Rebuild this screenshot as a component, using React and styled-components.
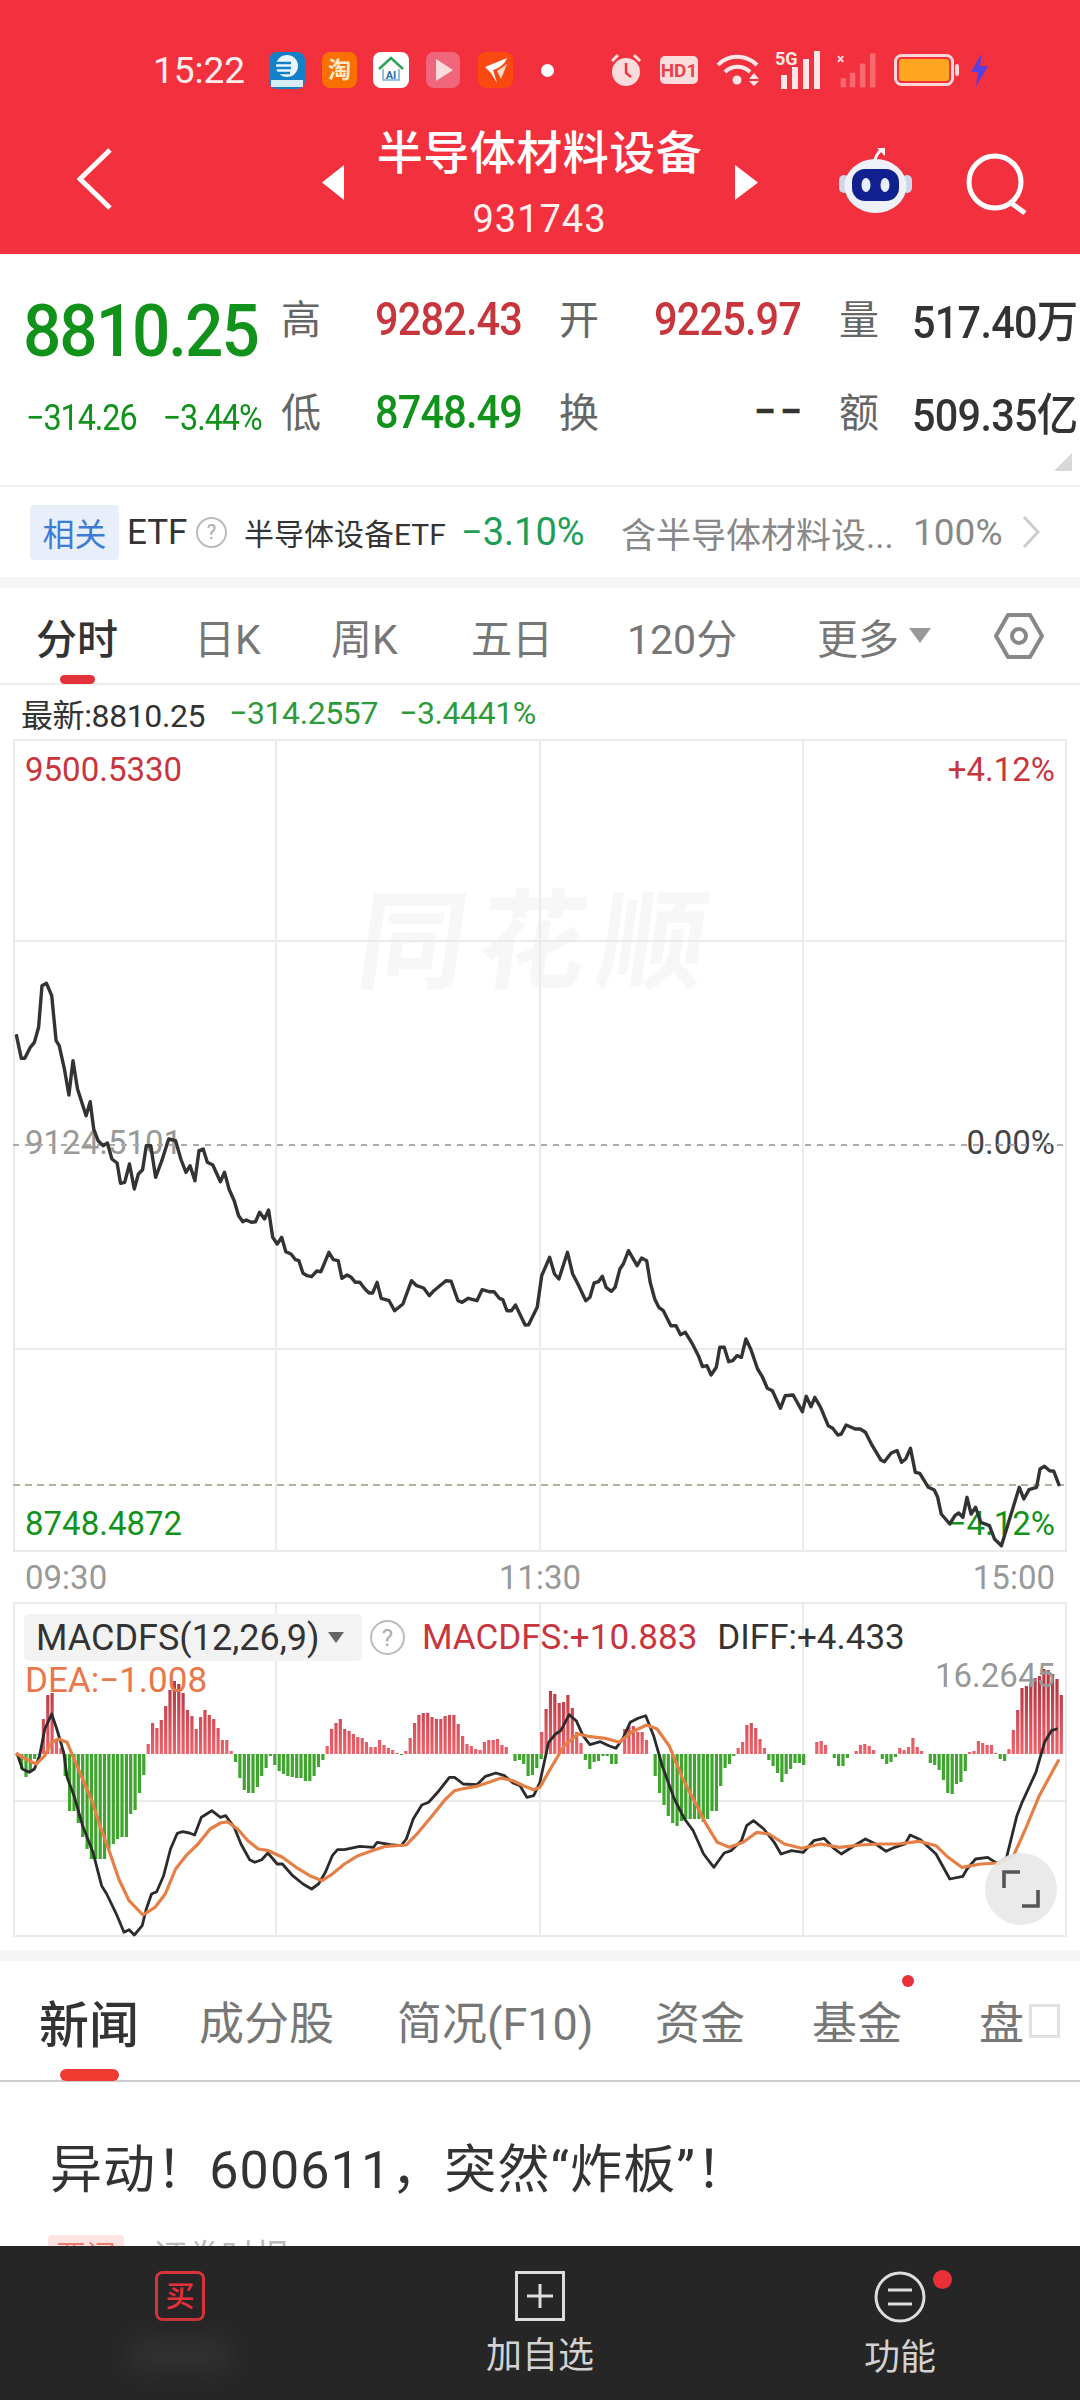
import React from 'react';
import styled, { createGlobalStyle } from 'styled-components';

const GlobalStyle = createGlobalStyle`
  html, body { margin: 0; padding: 0; background: #fff; }
  body { font-family: Roboto, "Noto Sans CJK SC", sans-serif; }
  * { box-sizing: border-box; }
`;

const RED = '#c8353c';
const GREEN = '#11921a';
const LINE = '#ebebeb';

const Page = styled.div`
  width: 1080px;
  height: 2400px;
  overflow: hidden;
  display: flex;
  flex-direction: column;
  background: #fff;
`;

/* header */
const Header = styled.header`
  height: 254px;
  flex: none;
  background: #f3303d;
  color: #fff;
`;
const StatusBar = styled.div`
  height: 72px;
  margin-top: 34px;
  padding-left: 153px;
  display: flex;
  align-items: center;
`;
const Time = styled.span`
  width: 116px;
  font-size: 37px;
  color: #fdeeee;
`;
const StatusIcon = styled.svg`
  flex: none;
  margin-left: ${(p) => p.$gap || 0}px;
`;
const NavBar = styled.div`
  height: 148px;
  padding-left: 77px;
  display: flex;
  align-items: flex-start;
`;
const NavIcon = styled.svg`
  flex: none;
  margin-top: ${(p) => p.$top}px;
  margin-left: ${(p) => p.$gap || 0}px;
`;
const TitleBlock = styled.div`
  width: 391px;
  flex: none;
  text-align: center;
`;
const Title = styled.div`
  font-size: 46px;
  line-height: 50px;
  margin-top: 22px;
  font-weight: 500;
  letter-spacing: 0.5px;
`;
const Code = styled.div`
  font-size: 38px;
  line-height: 44px;
  margin-top: 19px;
  letter-spacing: 1px;
  color: #fff0f0;
`;

/* quote block */
const Quote = styled.section`
  position: relative;
  height: 231px;
  flex: none;
  padding: 18px 0 0 26px;
  display: grid;
  grid-template-columns: 255px 94px 184px 95px 185px 73px 168px;
  grid-template-rows: 93px 93px;
  align-items: center;
`;
const BigPrice = styled.div`
  font-size: 73px;
  font-weight: 500;
  letter-spacing: -2.2px;
  line-height: 1;
  margin: 26px 0 0 -3px;
  color: ${GREEN};
  transform: scaleX(0.925);
  transform-origin: left;
`;
const Changes = styled.div`
  display: flex;
  gap: 29px;
  margin-top: 12px;
  font-size: 36px;
  letter-spacing: -1.2px;
  color: ${GREEN};
  transform: scaleX(0.9);
  transform-origin: left;
  white-space: nowrap;
`;
const QuoteLabel = styled.div`
  font-size: 40px;
  margin-top: -4px;
  color: #666;
`;
const QuoteValue = styled.div`
  font-size: 46px;
  font-weight: 500;
  letter-spacing: -0.9px;
  white-space: nowrap;
  color: ${(p) => p.$color || '#333'};
  transform: scaleX(0.9);
  transform-origin: left;
`;
const EmptyValue = styled.div`
  width: 145px;
  font-size: 40px;
  font-weight: 700;
  letter-spacing: -3px;
  text-align: right;
  color: #333;
`;
const QuoteAmount = styled(QuoteValue)`
  font-size: 45px;
  letter-spacing: -0.8px;
  transform: scaleX(0.92);
`;
const CornerMark = styled.div`
  position: absolute;
  right: 8px;
  bottom: 14px;
  width: 18px;
  height: 18px;
  background: #d8d8d8;
  clip-path: polygon(100% 0, 100% 100%, 0 100%);
`;

/* etf row */
const EtfRow = styled.section`
  height: 92px;
  flex: none;
  border-top: 2px solid #f0f0f0;
  padding-left: 30px;
  display: flex;
  align-items: center;
  white-space: nowrap;
`;
const EtfBadge = styled.span`
  width: 89px;
  height: 55px;
  display: flex;
  align-items: center;
  justify-content: center;
  font-size: 32px;
  color: #3d7cd6;
  background: #e8effb;
  border-radius: 4px;
`;
const EtfText = styled.span`
  margin-left: ${(p) => p.$gap}px;
  font-size: ${(p) => p.$size}px;
  color: ${(p) => p.$color};
  width: ${(p) => p.$width}px;
`;
const HelpDot = styled.span`
  flex: none;
  width: ${(p) => p.$size}px;
  height: ${(p) => p.$size}px;
  margin-left: ${(p) => p.$gap}px;
  border: 2px solid #bbb;
  border-radius: 50%;
  color: #aaa;
  font-size: ${(p) => p.$size - 11}px;
  display: flex;
  align-items: center;
  justify-content: center;
`;
const Divider = styled.div`
  height: ${(p) => p.$h}px;
  flex: none;
  background: ${(p) => p.$color || '#f5f5f5'};
`;

/* period tabs */
const Periods = styled.nav`
  height: 97px;
  flex: none;
  padding-left: 36px;
  border-bottom: 2px solid #ececec;
  display: grid;
  grid-template-columns: 158px 137px 140px 156px 190px 177px 1fr;
  align-items: center;
  position: relative;
`;
const PeriodTab = styled.span`
  display: flex;
  align-items: center;
  gap: 10px;
  font-size: 41px;
  color: ${(p) => (p.$active ? '#333' : '#777')};
  font-weight: ${(p) => (p.$active ? 500 : 400)};
`;
const TabMark = styled.i`
  position: absolute;
  left: ${(p) => p.$left}px;
  bottom: -1px;
  width: ${(p) => p.$width}px;
  height: ${(p) => p.$height}px;
  background: ${(p) => p.$color};
  border-radius: ${(p) => p.$height / 2}px;
`;
const InfoLine = styled.div`
  height: 54px;
  flex: none;
  padding: 2px 0 0 21px;
  display: grid;
  grid-template-columns: 208px 170px 1fr;
  align-items: center;
  font-size: 32px;
  letter-spacing: -0.4px;
  color: #333;
`;
const InfoChange = styled.span`
  color: #2f9a3a;
`;

/* charts */
const ChartPanel = styled.div`
  position: relative;
  margin-left: 13px;
  width: 1054px;
  height: ${(p) => p.$h}px;
  flex: none;
  overflow: hidden;
`;
const ChartLayer = styled.svg`
  position: absolute;
  inset: 0;
`;
const Watermark = styled.div`
  position: absolute;
  left: 346px;
  top: 150px;
  font-size: 108px;
  line-height: 1;
  font-weight: 700;
  letter-spacing: 12px;
  color: #f7f7f7;
  transform: skewX(-8deg);
  white-space: nowrap;
`;
const ChartLabel = styled.span`
  position: absolute;
  top: ${(p) => p.$top}px;
  ${(p) => (p.$right ? 'right: 12px;' : 'left: 12px;')}
  font-size: ${(p) => p.$size || 33}px;
  line-height: 1;
  color: ${(p) => p.$color};
  white-space: nowrap;
`;
const TimeAxis = styled.div`
  height: 49px;
  flex: none;
  padding: 0 25px;
  display: flex;
  justify-content: space-between;
  align-items: center;
  font-size: 33px;
  color: #999;
`;
const Legend = styled.div`
  position: absolute;
  left: 11px;
  top: 12px;
  display: flex;
  align-items: center;
  font-size: 36px;
  white-space: nowrap;
`;
const LegendPill = styled.span`
  width: 338px;
  height: 47px;
  padding-left: 12px;
  border-radius: 5px;
  background: #f3f3f3;
  color: #333;
  display: flex;
  align-items: center;
  gap: 8px;
`;
const DownCaret = styled.i`
  width: 0;
  height: 0;
  border-left: ${(p) => p.$size}px solid transparent;
  border-right: ${(p) => p.$size}px solid transparent;
  border-top: ${(p) => p.$size * 1.4}px solid ${(p) => p.$color};
`;
const LegendValue = styled.span`
  margin-left: ${(p) => p.$gap}px;
  font-size: 35px;
  color: ${(p) => p.$color};
`;
const ExpandButton = styled.div`
  position: absolute;
  left: 972px;
  top: 251px;
  width: 72px;
  height: 72px;
  border-radius: 50%;
  background: rgba(232, 232, 232, 0.92);
  display: flex;
  align-items: center;
  justify-content: center;
`;

/* news */
const NewsTabs = styled.nav`
  height: 121px;
  flex: none;
  position: relative;
  padding-left: 39px;
  border-bottom: 2px solid #ccc;
  display: grid;
  grid-template-columns: 160px 198px 258px 157px 167px 1fr;
  align-items: center;
`;
const NewsTab = styled.span`
  position: relative;
  display: flex;
  align-items: center;
  width: fit-content;
  font-size: ${(p) => (p.$active ? 50 : 45)}px;
  font-weight: ${(p) => (p.$active ? 500 : 400)};
  color: ${(p) => (p.$active ? '#333' : '#777')};
  white-space: nowrap;
`;
const Dot = styled.i`
  position: absolute;
  left: ${(p) => p.$left}px;
  top: ${(p) => p.$top}px;
  width: ${(p) => p.$size}px;
  height: ${(p) => p.$size}px;
  border-radius: 50%;
  background: #e8303a;
`;
const Tofu = styled.i`
  width: 31px;
  height: 34px;
  margin-left: 5px;
  border: 3px solid #e2e2e2;
`;
const NewsBody = styled.article`
  height: 164px;
  flex: none;
  overflow: hidden;
  padding: 58px 0 0 50px;
`;
const Headline = styled.h2`
  margin: 0;
  font-size: 52px;
  line-height: 62px;
  font-weight: 400;
  color: #333;
  letter-spacing: 1.1px;
  white-space: nowrap;
`;
const NewsMeta = styled.div`
  margin-top: 33px;
  display: flex;
  align-items: flex-start;
  gap: 29px;
  margin-left: -2px;
  font-size: 34px;
  line-height: 44px;
  color: #bbb;
`;
const MetaTag = styled.span`
  width: 76px;
  height: 44px;
  background: #fde4e2;
  color: #f0796f;
  font-size: 30px;
  text-align: center;
  border-radius: 4px;
`;

/* bottom bar */
const BottomBar = styled.footer`
  flex: 1;
  background: #262626;
  display: grid;
  grid-template-columns: repeat(3, 360px);
`;
const BarItem = styled.div`
  position: relative;
  padding-top: 25px;
  display: flex;
  flex-direction: column;
  align-items: center;
  color: #d2d2d2;
  font-size: 36px;
`;
const BarLabel = styled.span`
  margin-top: 14px;
  line-height: 42px;
`;
const Smudge = styled.i`
  width: 100px;
  height: 34px;
  margin-top: 16px;
  background: #313131;
  filter: blur(12px);
`;

/* chart data: traced from crops, x scaled 2.904, y scaled 3 */
const toPoints = (pts, ox, oy) => pts.map(([x, y]) => [ox + x / 2.904, oy + y / 3]);
const toPath = (pts) =>
  pts.map(([x, y], i) => `${i ? 'L' : 'M'}${x.toFixed(1)} ${y.toFixed(1)}`).join(' ');

const priceA = [[48,890],[62,958],[72,958],[88,925],[100,910],[112,865],[122,740],[135,733],[150,770],[163,905],[172,920],[187,990],[200,1068],[212,965],[225,1050],[250,1130],[262,1088],[272,1170]];
const priceB = [[285,5],[300,20],[312,12],[325,60],[340,72],[350,133],[362,130],[376,75],[390,150],[402,105],[414,92],[425,20],[438,20],[452,115],[470,65],[490,0],[510,5],[525,60],[540,100],[552,80],[566,125],[578,35],[590,30],[602,70],[618,78],[640,128],[652,100],[665,150],[680,185],[693,230],[705,248],[715,243],[730,250],[742,248],[754,220],[768,240],[780,213],[792,295],[805,315],[818,295],[830,338],[845,345],[858,362],[868,365],[880,403],[892,410],[905,413],[920,396],[932,398],[955,340],[968,362],[982,365],[993,418],[1008,408],[1020,415],[1032,430],[1045,430],[1060,450],[1072,462],[1082,462],[1095,430],[1107,478],[1130,485],[1146,515],[1170,495],[1195,425],[1210,440],[1230,447],[1247,470],[1260,455],[1295,425],[1310,427],[1330,485],[1342,490],[1360,478],[1385,485],[1400,452],[1420,458],[1435,458],[1450,478],[1460,482],[1472,515],[1485,515],[1497,498],[1525,558],[1535,557],[1560,505]];
const priceC = [[5,410],[28,355],[42,405],[55,420],[80,340],[95,405],[110,435],[133,485],[145,475],[157,432],[170,428],[181,412],[192,445],[207,457],[218,445],[232,390],[242,375],[257,335],[282,380],[295,357],[310,365],[320,430],[333,480],[345,505],[358,515],[380,560],[395,560],[408,587],[422,580],[440,610],[460,650],[472,683],[485,680],[497,708],[512,685],[522,625],[535,625],[548,668],[560,665],[572,650],[585,655],[598,600],[612,630],[632,690],[645,712],[660,748],[675,755],[698,808],[712,770],[735,768],[762,818],[773,772],[787,803],[798,775],[815,805],[837,860],[850,868],[865,888],[875,885],[889,858],[915,870],[930,870],[945,880],[965,920],[990,963],[1000,968],[1020,942],[1037,935],[1050,970],[1062,960],[1076,928],[1090,1000],[1103,1003],[1128,1045],[1145,1053],[1155,1075],[1165,1125],[1190,1155],[1205,1130],[1216,1122],[1228,1135],[1240,1075],[1252,1125],[1265,1105],[1280,1150],[1305,1160],[1320,1200],[1340,1220],[1392,1045],[1405,1080],[1420,1052],[1442,1045],[1452,990],[1465,982],[1480,995],[1492,997],[1507,1037]];
const pricePath = toPath([
  ...toPoints(priceA, 0, 740),
  ...toPoints(priceB, 0, 1140),
  ...toPoints(priceC, 540, 1140),
]);

const difA = [[50,465],[65,510],[85,520],[100,510],[115,470],[130,390],[150,345],[165,390],[185,460],[195,535],[215,590],[240,680],[270,760],[295,860],[310,885],[340,950],[360,1000],[375,992],[390,1008],[413,980],[425,930],[440,885],[455,878],[475,830],[495,750],[515,703],[530,698],[550,702],[565,708],[585,655],[615,635],[640,655],[655,650],[680,685],[700,735],[725,782],[740,790],[760,782],[778,762],[805,795],[820,795],[850,830],[880,855],[905,870],[925,855],[945,820],[965,770],[980,752],[1000,752],[1045,742],[1085,745],[1095,730],[1135,737],[1165,740],[1180,720],[1200,660],[1225,618],[1245,610],[1275,575],[1305,535],[1320,535],[1345,555],[1385,557],[1410,532],[1440,522],[1465,530],[1490,552],[1510,560],[1530,595],[1550,590],[1568,550]];
const difB = [[25,430],[45,405],[60,395],[85,347],[105,365],[125,410],[145,437],[175,428],[200,440],[220,448],[240,420],[262,370],[285,358],[307,350],[330,410],[355,500],[390,600],[420,660],[445,695],[475,765],[505,805],[535,762],[555,755],[585,725],[600,680],[620,665],[650,690],[680,730],[700,765],[730,755],[765,760],[795,725],[825,718],[850,745],[875,765],[910,742],[945,720],[975,735],[1005,757],[1030,745],[1060,735],[1075,708],[1105,722],[1150,765],[1190,840],[1228,832],[1240,810],[1265,780],[1300,775],[1330,795],[1355,775],[1385,650],[1400,610],[1440,520],[1465,430],[1485,395],[1500,390]];
const deaA = [[50,465],[75,480],[105,495],[130,470],[150,430],[170,420],[195,430],[215,480],[240,540],[265,600],[290,680],[315,750],[345,840],[375,905],[415,948],[450,925],[480,885],[510,810],[540,770],[575,735],[610,690],[640,672],[660,668],[690,690],[720,725],[750,750],[780,755],[820,775],[860,805],[900,830],[935,845],[965,825],[1000,795],[1040,770],[1080,755],[1120,742],[1180,738],[1215,700],[1255,650],[1290,605],[1320,575],[1340,570],[1385,562],[1420,550],[1455,537],[1490,545],[1520,560],[1550,572],[1568,565]];
const deaB = [[30,510],[70,440],[110,405],[140,412],[190,418],[230,430],[265,400],[310,378],[340,390],[375,440],[415,540],[450,610],[485,680],[515,730],[550,745],[590,730],[630,700],[665,705],[710,735],[760,748],[815,735],[870,745],[930,738],[985,735],[1040,735],[1100,727],[1150,740],[1185,775],[1225,805],[1280,795],[1330,792],[1375,770],[1410,690],[1450,590],[1505,485]];
const difPath = toPath([...toPoints(difA, 0, 1600), ...toPoints(difB, 540, 1600)]);
const deaPath = toPath([...toPoints(deaA, 0, 1600), ...toPoints(deaB, 540, 1600)]);

const barsLeft = [-2,-15,-23,-18,-5,-1,35,59,61,15,6,-22,-57,-57,-69,-83,-95,-105,-105,-105,-105,-95,-90,-85,-83,-83,-60,-56,-39,-21,10,31,26,34,48,64,73,70,61,44,38,25,37,44,39,35,26,14,14,3,-8,-24,-36,-39,-39,-33,-22,-14,-2,-11,-17,-20,-22,-23,-24,-24,-27,-27,-22,-13,-6,8,25,31,35,25,23,20,17,16,12,7,7,14,9,6,4,1,-1,3,16,31,39,41,41,37,35,35,38,39,39,30,18,10,8,5,4,12,14,14,15,9,7,0,-7,-6,-10,-22,-21,-14,-5];
const barsRight = [22,45,63,60,51,52,59,46,22,11,-6,-15,-8,-7,-2,-2,-10,-10,0,25,28,28,22,22,14,0,-22,-39,-51,-62,-69,-72,-67,-65,-65,-65,-65,-68,-65,-57,-57,-32,-14,-10,-2,6,12,29,31,26,15,6,-6,-12,-19,-28,-20,-15,-9,-9,-11,0,0,12,13,9,0,-4,-12,-12,-4,0,3,9,10,8,4,0,-5,-10,-8,-3,6,4,7,16,7,3,0,-9,-11,-16,-26,-39,-40,-30,-28,-17,2,3,13,11,9,9,1,-5,-7,5,24,44,66,68,71,76,78,85,84,80,75,59];

const PITCH = 12.68 / 2.904;
const ZERO = 1755;
const barPath = (sign) => {
  const one = (vals, start) =>
    vals
      .map((v, i) => (v * sign > 0 ? `M${(start + i * PITCH).toFixed(1)} ${ZERO}V${ZERO - v}` : ''))
      .join('');
  return one(barsLeft, 50 / 2.904) + one(barsRight, 540 + 5 / 2.904);
};

const GridLines = ({ xs, ys, x0, x1, y0, y1 }) => (
  <g stroke={LINE} strokeWidth="2" fill="none">
    {xs.map((x) => <path key={x} d={`M${x} ${y0}V${y1}`} />)}
    {ys.map((y) => <path key={y} d={`M${x0} ${y}H${x1}`} />)}
  </g>
);

const ROUND = { fill: 'none', strokeLinejoin: 'round', strokeLinecap: 'round' };

const Signal = ({ faded, gap }) => (
  <StatusIcon $gap={gap} width={faded ? 43 : 47} height="42" viewBox="0 0 47 42">
    {faded ? (
      <g fill="#f9696f">
        <rect x="4" y="30" width="6" height="10" />
        <rect x="14" y="24" width="6" height="16" />
        <rect x="25" y="14" width="6" height="26" />
        <rect x="36" y="3" width="6" height="37" />
        <text x="0" y="14" fontSize="15" fontWeight="700" fill="#fde">×</text>
      </g>
    ) : (
      <g fill="#fbe7e7">
        <text x="0" y="16" fontSize="18" fontWeight="700" fontFamily="Roboto">5G</text>
        <rect x="6" y="26" width="6" height="14" />
        <rect x="17" y="18" width="6" height="22" />
        <rect x="28" y="10" width="6" height="30" />
        <rect x="39" y="2" width="6" height="38" />
      </g>
    )}
  </StatusIcon>
);

const StatusIcons = () => (
  <>
    <StatusIcon width="36" height="37" viewBox="0 0 36 37">
      <rect width="36" height="37" rx="8" fill="#1480c8" />
      <circle cx="18" cy="14" r="11" fill="#eaf6fd" />
      <path d="M5 11h17M6 16h16M9 21h12" stroke="#1480c8" strokeWidth="2.6" />
      <rect x="2" y="28" width="32" height="7" fill="#d8ecf8" />
    </StatusIcon>
    <StatusIcon $gap={17} width="35" height="36" viewBox="0 0 35 36">
      <rect width="35" height="36" rx="8" fill="#f97000" />
      <text x="17.5" y="26" textAnchor="middle" fontSize="23" fontWeight="700" fill="#ffe9c9" fontFamily="Noto Sans CJK SC">淘</text>
    </StatusIcon>
    <StatusIcon $gap={16} width="36" height="36" viewBox="0 0 36 36">
      <rect width="36" height="36" rx="8" fill="#fff" />
      <path d="M6 17 18 6l12 11" stroke="#30a45a" strokeWidth="2.6" fill="none" />
      <path d="M10 17v11h16V17" stroke="#7bb0d8" strokeWidth="1.6" fill="none" />
      <text x="18" y="27" textAnchor="middle" fontSize="11" fontWeight="700" fill="#2a6fb0">AI</text>
    </StatusIcon>
    <StatusIcon $gap={17} width="34" height="36" viewBox="0 0 34 36">
      <rect width="34" height="36" rx="8" fill="#f0677c" />
      <path d="M10 7 27 18 10 29Z" fill="#fbdcdc" />
    </StatusIcon>
    <StatusIcon $gap={18} width="35" height="36" viewBox="0 0 35 36">
      <rect width="35" height="36" rx="8" fill="#fa4a12" />
      <path d="M7 15 29 6c-2 6-8 10-14 12l4 13-6-10Z" fill="#fff" />
      <path d="M19 19 29 12l-6 15Z" fill="#ffd9c8" />
    </StatusIcon>
    <StatusIcon $gap={28} width="13" height="13" viewBox="0 0 13 13">
      <circle cx="6.5" cy="6.5" r="6.5" fill="#fff" />
    </StatusIcon>
    <StatusIcon $gap={56} width="32" height="34" viewBox="0 0 32 34">
      <circle cx="16" cy="19" r="14" fill="#fbdcdc" />
      <path d="M16 10v10l5 4" stroke="#f3303d" strokeWidth="2.4" fill="none" />
      <path d="M2 8 8 2M30 8l-6-6" stroke="#fbdcdc" strokeWidth="3" />
    </StatusIcon>
    <StatusIcon $gap={18} width="38" height="28" viewBox="0 0 38 28">
      <rect width="38" height="28" rx="5" fill="#fbdcdc" />
      <text x="19" y="21" textAnchor="middle" fontSize="19" fontWeight="700" fill="#e8434c" fontFamily="Roboto">HD1</text>
    </StatusIcon>
    <StatusIcon $gap={18} width="45" height="32" viewBox="0 0 45 32">
      <g stroke="#fbe7e7" strokeWidth="4" fill="none">
        <path d="M2 11C12 0 30 0 41 11" />
        <path d="M9 18c7-7 18-7 25 0" />
      </g>
      <circle cx="21" cy="26" r="4.5" fill="#fbe7e7" />
      <path d="M33 25h10l-5-6ZM33 27h10l-5 5Z" fill="#fbe7e7" />
    </StatusIcon>
    <Signal gap={14} />
    <Signal faded gap={15} />
    <StatusIcon $gap={14} width="65" height="32" viewBox="0 0 65 32">
      <rect x="1.5" y="1.5" width="57" height="29" rx="6" fill="none" stroke="#fbd6d6" strokeWidth="3" />
      <rect x="5" y="5" width="50" height="22" rx="3" fill="#ffa51f" />
      <rect x="61" y="10" width="4" height="12" rx="2" fill="#fbd6d6" />
    </StatusIcon>
    <StatusIcon $gap={11} width="18" height="34" viewBox="0 0 18 34">
      <path d="M12 0 1 19h7l-2 15L18 13h-8Z" fill="#5a3fe0" />
    </StatusIcon>
  </>
);

const Robot = () => (
  <NavIcon $top={41} $gap={81} width="73" height="66" viewBox="0 0 73 66">
    <path d="M36 14c0-5 3-8 6-11" stroke="#f6f6fa" strokeWidth="3" fill="none" />
    <path d="M38 1h8v8Z" fill="#f6f6fa" />
    <rect x="0" y="28" width="10" height="18" rx="5" fill="#cfd6e6" />
    <rect x="63" y="28" width="10" height="18" rx="5" fill="#cfd6e6" />
    <ellipse cx="36.5" cy="39" rx="31" ry="27" fill="#eef1f7" />
    <rect x="13" y="22" width="47" height="32" rx="13" fill="#10218f" />
    <ellipse cx="27" cy="38" rx="4.5" ry="7" fill="#e7eeff" />
    <ellipse cx="46" cy="38" rx="4.5" ry="7" fill="#e7eeff" />
  </NavIcon>
);

export default function App() {
  return (
    <Page lang="zh-CN">
      <GlobalStyle />
      <Header>
        <StatusBar>
          <Time>15:22</Time>
          <StatusIcons />
        </StatusBar>
        <NavBar>
          <NavIcon $top={42} width="35" height="62" viewBox="0 0 35 62">
            <path d="M33 2 3 31l30 29" stroke="#fff" strokeWidth="5" fill="none" />
          </NavIcon>
          <NavIcon $top={59} $gap={210} width="22" height="35" viewBox="0 0 22 35">
            <path d="M22 0v35L0 17.5Z" fill="#fff" />
          </NavIcon>
          <TitleBlock>
            <Title>半导体材料设备</Title>
            <Code>931743</Code>
          </TitleBlock>
          <NavIcon $top={59} width="23" height="35" viewBox="0 0 23 35">
            <path d="M0 0v35l23-17.5Z" fill="#fff" />
          </NavIcon>
          <Robot />
          <NavIcon $top={47} $gap={54} width="62" height="62" viewBox="0 0 62 62">
            <circle cx="29" cy="29" r="26" stroke="#fff" strokeWidth="5" fill="none" />
            <path d="M45 50 59 60" stroke="#fff" strokeWidth="5" />
          </NavIcon>
        </NavBar>
      </Header>

      <Quote>
        <BigPrice>8810.25</BigPrice>
        <QuoteLabel>高</QuoteLabel>
        <QuoteValue $color={RED}>9282.43</QuoteValue>
        <QuoteLabel>开</QuoteLabel>
        <QuoteValue $color={RED}>9225.97</QuoteValue>
        <QuoteLabel>量</QuoteLabel>
        <QuoteAmount>517.40万</QuoteAmount>
        <Changes>
          <span>−314.26</span>
          <span>−3.44%</span>
        </Changes>
        <QuoteLabel>低</QuoteLabel>
        <QuoteValue $color={GREEN}>8748.49</QuoteValue>
        <QuoteLabel>换</QuoteLabel>
        <EmptyValue>− −</EmptyValue>
        <QuoteLabel>额</QuoteLabel>
        <QuoteAmount>509.35亿</QuoteAmount>
        <CornerMark />
      </Quote>

      <EtfRow>
        <EtfBadge>相关</EtfBadge>
        <EtfText $gap={8} $size={35} $color="#333" $width={59}>ETF</EtfText>
        <HelpDot $gap={10} $size={31}>?</HelpDot>
        <EtfText $gap={17} $size={30} $color="#333" $width={197}>半导体设备ETF</EtfText>
        <EtfText $gap={20} $size={38} $color="#1d9e58" $width={122}>−3.10%</EtfText>
        <EtfText $gap={38} $size={35} $color="#888" $width={253}>含半导体材料设...</EtfText>
        <EtfText $gap={39} $size={37} $color="#888" $width={90}>100%</EtfText>
        <NavIcon $top={0} $gap={19} width="18" height="32" viewBox="0 0 18 32">
          <path d="M2 1 16 16 2 31" stroke="#ccc" strokeWidth="3" fill="none" />
        </NavIcon>
      </EtfRow>
      <Divider $h={11} />

      <Periods>
        <PeriodTab $active>分时</PeriodTab>
        <PeriodTab>日K</PeriodTab>
        <PeriodTab>周K</PeriodTab>
        <PeriodTab>五日</PeriodTab>
        <PeriodTab>120分</PeriodTab>
        <PeriodTab>
          更多<DownCaret $size={11} $color="#999" />
        </PeriodTab>
        <svg width="50" height="48" viewBox="0 0 50 48">
          <path d="M14 3h22l12 21-12 21H14L2 24Z" stroke="#888" strokeWidth="4" fill="none" strokeLinejoin="round" />
          <circle cx="25" cy="24" r="7" stroke="#888" strokeWidth="4" fill="none" />
        </svg>
        <TabMark $left={60} $width={35} $height={9} $color="#e5333b" />
      </Periods>
      <InfoLine>
        <span>最新:8810.25</span>
        <InfoChange>−314.2557</InfoChange>
        <InfoChange>−3.4441%</InfoChange>
      </InfoLine>

      <ChartPanel $h={814}>
        <Watermark>同花顺</Watermark>
        <ChartLabel $top={14} $color={RED}>9500.5330</ChartLabel>
        <ChartLabel $top={14} $right $color={RED}>+4.12%</ChartLabel>
        <ChartLabel $top={387} $color="#999">9124.5101</ChartLabel>
        <ChartLabel $top={387} $right $color="#444">0.00%</ChartLabel>
        <ChartLabel $top={768} $color={GREEN}>8748.4872</ChartLabel>
        <ChartLabel $top={768} $right $color={GREEN}>−4.12%</ChartLabel>
        <ChartLayer width="1054" height="814" viewBox="13 740 1054 814">
          <GridLines xs={[14, 276, 540, 803, 1066]} ys={[741, 942, 1350, 1552]} x0={13} x1={1067} y0={740} y1={1553} />
          <path d="M13 1146H1067" stroke="#aaa" strokeWidth="2" strokeDasharray="6 6" />
          <path d="M13 1486H1067" stroke="#b4b49c" strokeWidth="2" strokeDasharray="7 5" />
          <path d={pricePath} stroke="#333" strokeWidth="3.4" {...ROUND} />
        </ChartLayer>
      </ChartPanel>
      <TimeAxis>
        <span>09:30</span>
        <span>11:30</span>
        <span>15:00</span>
      </TimeAxis>

      <ChartPanel $h={335}>
        <ChartLayer width="1054" height="335" viewBox="13 1603 1054 335">
          <defs>
            <linearGradient id="redBar" gradientUnits="userSpaceOnUse" x1="0" y1="1690" x2="0" y2="1755">
              <stop offset="0" stopColor="#b93a45" />
              <stop offset="1" stopColor="#ee636b" />
            </linearGradient>
          </defs>
          <GridLines xs={[14, 276, 540, 803, 1066]} ys={[1604, 1802, 1937]} x0={13} x1={1067} y0={1603} y1={1938} />
          <path d={barPath(1)} stroke="url(#redBar)" strokeWidth="3.2" fill="none" />
          <path d={barPath(-1)} stroke="#3fa52e" strokeWidth="3.2" fill="none" />
          <path d={difPath} stroke="#2b2b2b" strokeWidth="2.8" {...ROUND} />
          <path d={deaPath} stroke="#e67f45" strokeWidth="3.2" {...ROUND} />
        </ChartLayer>
        <Legend>
          <LegendPill>
            MACDFS(12,26,9)<DownCaret $size={8} $color="#666" />
          </LegendPill>
          <HelpDot $gap={8} $size={35}>?</HelpDot>
          <LegendValue $gap={17} $color={RED}>MACDFS:+10.883</LegendValue>
          <LegendValue $gap={20} $color="#333">DIFF:+4.433</LegendValue>
        </Legend>
        <ChartLabel $top={61} $size={35} $color="#e8784a">DEA:−1.008</ChartLabel>
        <ChartLabel $top={57} $right $color="#999">16.2645</ChartLabel>
        <ExpandButton>
          <svg width="38" height="38" viewBox="0 0 38 38">
            <path d="M2 18V2h16M36 20v16H20" stroke="#555" strokeWidth="3.6" fill="none" />
          </svg>
        </ExpandButton>
      </ChartPanel>
      <Divider $h={13} $color="#fff" />
      <Divider $h={11} />

      <NewsTabs>
        <NewsTab $active>新闻</NewsTab>
        <NewsTab>成分股</NewsTab>
        <NewsTab>简况(F10)</NewsTab>
        <NewsTab>资金</NewsTab>
        <NewsTab>
          基金
          <Dot $left={90} $top={-13} $size={12} />
        </NewsTab>
        <NewsTab>
          盘<Tofu />
        </NewsTab>
        <TabMark $left={60} $width={59} $height={12} $color="#ef3b32" />
      </NewsTabs>
      <NewsBody>
        <Headline>异动！600611，突然“炸板”！</Headline>
        <NewsMeta>
          <MetaTag>要闻</MetaTag>
          <span>证券时报</span>
        </NewsMeta>
      </NewsBody>

      <BottomBar>
        <BarItem>
          <svg width="50" height="50" viewBox="0 0 50 50">
            <rect x="1.5" y="1.5" width="47" height="47" rx="6" stroke="#d8343c" strokeWidth="3" fill="none" />
            <text x="25" y="36" textAnchor="middle" fontSize="29" fontWeight="500" fill="#e8303a" fontFamily="Noto Sans CJK SC">买</text>
          </svg>
          <Smudge />
        </BarItem>
        <BarItem>
          <svg width="50" height="50" viewBox="0 0 50 50">
            <rect x="1.5" y="1.5" width="47" height="47" stroke="#ddd" strokeWidth="3" fill="none" />
            <path d="M25 13v24M12 25h26" stroke="#ddd" strokeWidth="3" />
          </svg>
          <BarLabel>加自选</BarLabel>
        </BarItem>
        <BarItem>
          <svg width="52" height="52" viewBox="0 0 52 52">
            <circle cx="26" cy="26" r="24" stroke="#ddd" strokeWidth="3" fill="none" />
            <path d="M14 19h24M14 33h24" stroke="#ddd" strokeWidth="3" />
          </svg>
          <BarLabel>功能</BarLabel>
          <Dot $left={213} $top={24} $size={19} />
        </BarItem>
      </BottomBar>
    </Page>
  );
}
